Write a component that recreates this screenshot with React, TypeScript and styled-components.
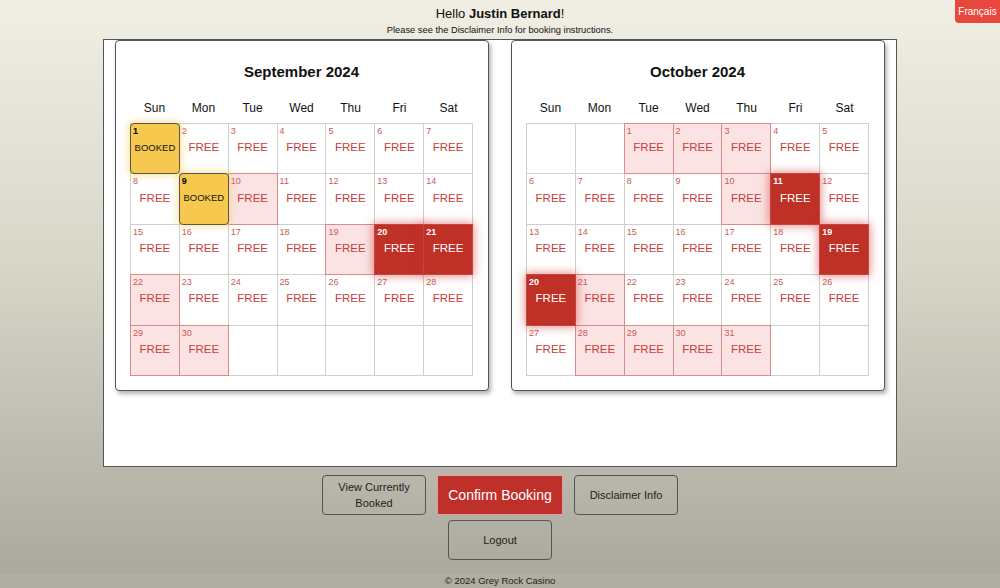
import React from 'react';
import styled, { createGlobalStyle, css } from 'styled-components';

const GlobalStyle = createGlobalStyle`
  html, body {
    margin: 0;
    padding: 0;
  }
  body {
    font-family: "Liberation Sans", Arial, sans-serif;
    background: linear-gradient(to bottom, #f1eee3 0%, #d8d5c9 45%, #a9a69b 100%);
    min-height: 588px;
    color: #111;
  }
`;

const Page = styled.div`
  position: relative;
  min-height: 588px;
  display: flex;
  flex-direction: column;
  align-items: center;
`;

const LangButton = styled.button`
  position: absolute;
  top: 0;
  right: 0;
  width: 45px;
  height: 23px;
  border: none;
  border-radius: 0 0 0 4px;
  background: #e8473d;
  color: #fff;
  font-family: inherit;
  font-size: 10px;
  padding: 0;
  cursor: pointer;
`;

const Greeting = styled.div`
  font-size: 13px;
  line-height: 15px;
  margin-top: 6px;
`;

const SubText = styled.div`
  font-size: 9.3px;
  line-height: 11px;
  margin-top: 4px;
  margin-bottom: 3px;
`;

const Panel = styled.div`
  width: 794px;
  height: 428px;
  box-sizing: border-box;
  background: #fff;
  border: 1px solid #555;
  display: flex;
  justify-content: center;
  align-items: flex-start;
  gap: 22px;
  padding: 0 11px;
`;

const Card = styled.div`
  width: 374px;
  box-sizing: border-box;
  background: #fff;
  border: 1px solid #555;
  border-radius: 4px;
  box-shadow: 2px 3px 4px rgba(0, 0, 0, 0.3);
  padding: 0 15px 14px 14px;
`;

const Title = styled.h2`
  margin: 0;
  padding-top: 21px;
  height: 20px;
  text-align: center;
  font-size: 15px;
  line-height: 20px;
  font-weight: bold;
`;

const DayRow = styled.div`
  display: grid;
  grid-template-columns: repeat(7, 1fr);
  margin-top: 18px;
  height: 17px;
`;

const DayName = styled.div`
  text-align: center;
  font-size: 12px;
  line-height: 17px;
`;

const Grid = styled.div`
  margin-top: 6px;
  width: 343px;
  height: 253px;
  display: grid;
  grid-template-columns: repeat(7, 1fr);
  grid-template-rows: repeat(5, 1fr);
  gap: 1px;
  padding: 1px;
  box-sizing: border-box;
  background: #cfcfcf;
`;

type Kind = 'empty' | 'free' | 'pink' | 'red' | 'booked';

const Cell = styled.div<{ $kind: Kind }>`
  position: relative;
  background: #fff;
  box-sizing: border-box;
  display: flex;
  align-items: center;
  justify-content: center;
  padding-bottom: 3px;
  font-size: 11.5px;
  color: #c8403a;
  ${({ $kind }) =>
    $kind === 'pink' &&
    css`
      background: #fbe3e3;
      box-shadow: 0 0 0 1px #d98b8b;
      z-index: 1;
    `}
  ${({ $kind }) =>
    $kind === 'red' &&
    css`
      background: #bf3027;
      color: #fff;
      box-shadow: 0 0 0 1px #c4463f, 0 0 9px 2px rgba(200, 50, 45, 0.55);
      z-index: 2;
    `}
  ${({ $kind }) =>
    $kind === 'booked' &&
    css`
      background: #f6c94e;
      color: #111;
      font-size: 9.5px;
      border: 1px solid #555;
      border-radius: 4px;
      margin: -1px;
      box-shadow: 0 0 6px 2px rgba(246, 205, 90, 0.55);
      z-index: 2;
    `}
`;

const DayNum = styled.span<{ $kind: Kind }>`
  position: absolute;
  top: 2px;
  left: 2px;
  font-size: 9px;
  line-height: 10px;
  color: ${({ $kind }) => ($kind === 'red' ? '#fff' : $kind === 'booked' ? '#000' : '#cc5a55')};
  font-weight: ${({ $kind }) => ($kind === 'red' || $kind === 'booked' ? 'bold' : 'normal')};
`;

const Buttons = styled.div`
  display: flex;
  gap: 11px;
  margin-top: 8px;
`;

const Button = styled.button<{ $primary?: boolean }>`
  width: ${({ $primary }) => ($primary ? '126px' : '104px')};
  height: 40px;
  box-sizing: border-box;
  border: 1px solid ${({ $primary }) => ($primary ? '#e0a09c' : '#555')};
  border-radius: ${({ $primary }) => ($primary ? '0' : '4px')};
  background: ${({ $primary }) => ($primary ? '#c0302a' : 'transparent')};
  color: ${({ $primary }) => ($primary ? '#fff' : '#222')};
  font-family: inherit;
  font-size: ${({ $primary }) => ($primary ? '14px' : '11px')};
  line-height: 16px;
  padding: 0 8px;
  cursor: pointer;
`;

const LogoutRow = styled.div`
  margin-top: 5px;
`;

const Footer = styled.footer`
  margin-top: auto;
  width: 100%;
  height: 15px;
  background: rgba(180, 177, 166, 0.6);
  text-align: center;
  font-size: 9.5px;
  line-height: 15px;
  color: #222;
`;

const dayNames = ['Sun', 'Mon', 'Tue', 'Wed', 'Thu', 'Fri', 'Sat'];

interface MonthData {
  title: string;
  offset: number;
  days: number;
  marks: Record<number, Kind>;
}

const months: MonthData[] = [
  {
    title: 'September 2024',
    offset: 0,
    days: 30,
    marks: { 1: 'booked', 9: 'booked', 10: 'pink', 19: 'pink', 20: 'red', 21: 'red', 22: 'pink', 29: 'pink', 30: 'pink' },
  },
  {
    title: 'October 2024',
    offset: 2,
    days: 31,
    marks: { 1: 'pink', 2: 'pink', 3: 'pink', 10: 'pink', 11: 'red', 19: 'red', 20: 'red', 21: 'pink', 28: 'pink', 29: 'pink', 30: 'pink', 31: 'pink' },
  },
];

const Month = ({ month }: { month: MonthData }) => {
  const cells: { day: number | null; kind: Kind }[] = [];
  for (let i = 0; i < 35; i++) {
    const day = i - month.offset + 1;
    if (day < 1 || day > month.days) cells.push({ day: null, kind: 'empty' });
    else cells.push({ day, kind: month.marks[day] || 'free' });
  }
  return (
    <Card>
      <Title>{month.title}</Title>
      <DayRow>
        {dayNames.map((d) => (
          <DayName key={d}>{d}</DayName>
        ))}
      </DayRow>
      <Grid>
        {cells.map((c, i) => (
          <Cell key={i} $kind={c.kind}>
            {c.day !== null && (
              <>
                <DayNum $kind={c.kind}>{c.day}</DayNum>
                {c.kind === 'booked' ? 'BOOKED' : 'FREE'}
              </>
            )}
          </Cell>
        ))}
      </Grid>
    </Card>
  );
};

const App = () => {
  return (
    <>
      <GlobalStyle />
      <Page>
        <LangButton>Français</LangButton>
        <Greeting>
          Hello <b>Justin Bernard</b>!
        </Greeting>
        <SubText>Please see the Disclaimer Info for booking instructions.</SubText>
        <Panel>
          {months.map((m) => (
            <Month key={m.title} month={m} />
          ))}
        </Panel>
        <Buttons>
          <Button>View Currently Booked</Button>
          <Button $primary>Confirm Booking</Button>
          <Button>Disclaimer Info</Button>
        </Buttons>
        <LogoutRow>
          <Button>Logout</Button>
        </LogoutRow>
        <Footer>© 2024 Grey Rock Casino</Footer>
      </Page>
    </>
  );
};

export default App;
